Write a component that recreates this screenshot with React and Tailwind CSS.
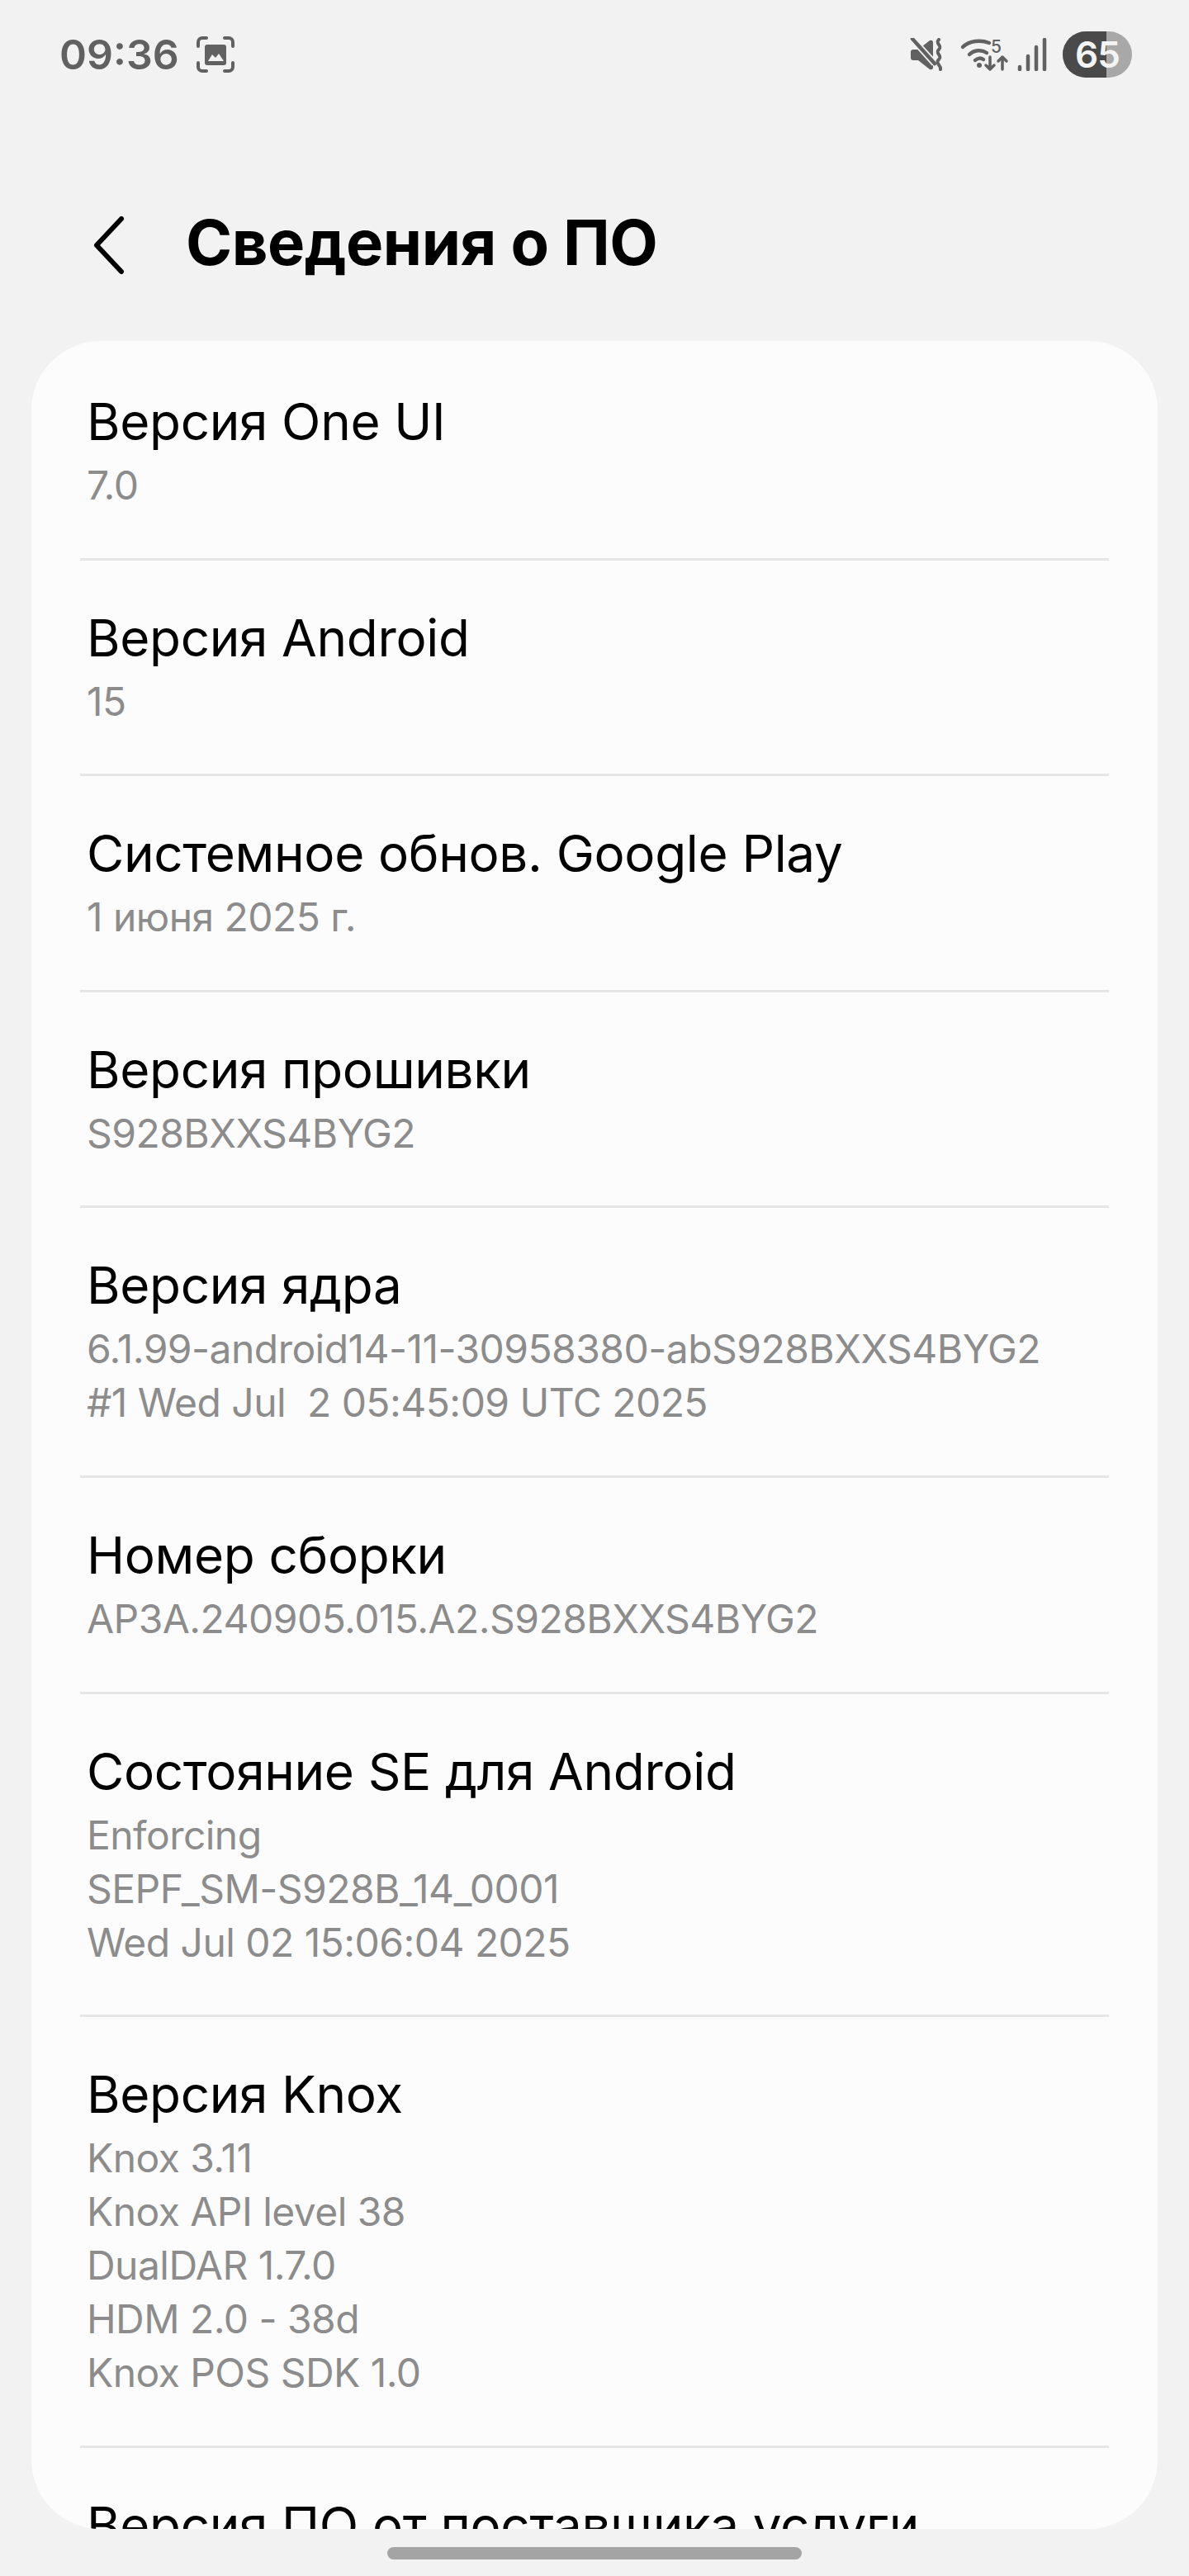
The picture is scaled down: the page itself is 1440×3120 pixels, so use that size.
import React from 'react';

const rows = [
  { title: 'Версия One UI', lines: ['7.0'] },
  { title: 'Версия Android', lines: ['15'] },
  { title: 'Системное обнов. Google Play', lines: ['1 июня 2025 г.'] },
  { title: 'Версия прошивки', lines: ['S928BXXS4BYG2'] },
  { title: 'Версия ядра', lines: ['6.1.99-android14-11-30958380-abS928BXXS4BYG2', '#1 Wed Jul  2 05:45:09 UTC 2025'] },
  { title: 'Номер сборки', lines: ['AP3A.240905.015.A2.S928BXXS4BYG2'] },
  { title: 'Состояние SE для Android', lines: ['Enforcing', 'SEPF_SM-S928B_14_0001', 'Wed Jul 02 15:06:04 2025'] },
  { title: 'Версия Knox', lines: ['Knox 3.11', 'Knox API level 38', 'DualDAR 1.7.0', 'HDM 2.0 - 38d', 'Knox POS SDK 1.0'] },
  { title: 'Версия ПО от поставщика услуги', lines: [] },
];

const ScreenshotIcon = () => (
  <svg width="48" height="46" viewBox="0 0 48 46" fill="none">
    <g stroke="#616161" strokeWidth="4" strokeLinecap="round">
      <path d="M13 3H8a5 5 0 0 0-5 5v5" />
      <path d="M35 3h5a5 5 0 0 1 5 5v5" />
      <path d="M13 43H8a5 5 0 0 1-5-5v-5" />
      <path d="M35 43h5a5 5 0 0 0 5-5v-5" />
    </g>
    <rect x="11" y="11" width="26" height="25" rx="3" fill="#616161" />
    <path d="M15 31l5-8 4 4 4-5 6 9z" fill="#f2f2f2" />
  </svg>
);

const MuteIcon = () => (
  <svg width="42" height="40" viewBox="0 0 42 40" fill="none">
    <path d="M1 17q0-3 3-3h6L24 3q4-1 4 3v30q0 3-4 2L10 27H4q-3 0-3-3z" fill="#616161" />
    <path d="M3 1l27 30" stroke="#f2f2f2" strokeWidth="8" />
    <path d="M3 1l27 30" stroke="#616161" strokeWidth="4.5" strokeLinecap="round" />
    <path d="M35 2c-5 5 5 7 0 12s5 7 0 12 3 7 2 12" stroke="#616161" strokeWidth="4" strokeLinecap="round" />
  </svg>
);

const WifiIcon = () => (
  <svg width="56" height="40" viewBox="0 0 56 40" fill="none" overflow="visible">
    <g stroke="#616161" strokeWidth="4.5" strokeLinecap="round">
      <path d="M2 11C10 3 24 2 34 6" />
      <path d="M10 20c6-6 15-6 21-2" />
      <path d="M17 27c3-3 7-3 10-1" />
    </g>
    <circle cx="22" cy="33" r="3" fill="#616161" />
    <text x="36" y="18" fontSize="21" fontWeight="500" fill="#616161" fontFamily="Inter, sans-serif">5</text>
    <g stroke="#616161" strokeWidth="3.5" strokeLinecap="round" strokeLinejoin="round">
      <path d="M35 23v15M30 33l5 5 5-5" />
      <path d="M50 38V23M45 28l5-5 5 5" />
    </g>
  </svg>
);

const SignalIcon = () => (
  <svg width="36" height="40" viewBox="0 0 36 40" fill="none">
    <g stroke="#616161" strokeWidth="4.5" strokeLinecap="round">
      <path d="M3 35v3" />
      <path d="M13 22v16" />
      <path d="M23 11v27" />
      <path d="M33 2v36" />
    </g>
  </svg>
);

const Battery = () => (
  <div className="relative flex h-[56px] w-[84px] items-center justify-center overflow-hidden rounded-full bg-[#a8a8a8]">
    <div className="absolute inset-y-0 left-0 w-[53px] bg-[#4a4a4a]" />
    <span className="relative text-[44px] font-semibold tracking-[-1px] text-[#f4f4f4]">65</span>
  </div>
);

const Row = ({ title, lines, first, last }) => (
  <div className="shrink-0">
    <div className={`px-[67px] pb-[55.6px] ${first ? 'pt-[63px]' : 'pt-[59px]'}`}>
      <div className="h-[70px] text-[62px] leading-[70px] tracking-[-0.35px] whitespace-nowrap text-black">{title}</div>
      {lines.length > 0 && (
        <div className="mt-[9px] text-[48px] leading-[65px] tracking-[-0.55px] whitespace-pre text-[#8c8c8c]">
          {lines.map((line, i) => <div key={i}>{line}</div>)}
        </div>
      )}
    </div>
    {!last && <div className="mx-[59px] h-[3px] bg-[#e6e6e6]" />}
  </div>
);

export default function App() {
  return (
    <div className="flex h-[3120px] w-[1440px] flex-col overflow-hidden bg-[#f2f2f2] font-['Inter','Noto_Sans',sans-serif]">
      {/* Status bar */}
      <div className="flex h-[132px] shrink-0 items-center justify-between pr-[69px] pl-[72px]">
        <div className="flex items-center gap-[20px]">
          <span className="text-[50px] font-semibold text-[#616161]">09:36</span>
          <ScreenshotIcon />
        </div>
        <div className="flex items-center">
          <MuteIcon />
          <div className="ml-[20px]"><WifiIcon /></div>
          <div className="ml-[12px]"><SignalIcon /></div>
          <div className="ml-[19px]"><Battery /></div>
        </div>
      </div>

      {/* Header */}
      <div className="flex h-[281px] shrink-0 items-start pt-[130px] pl-[113px]">
        <svg width="40" height="70" viewBox="0 0 40 70" fill="none">
          <path d="M34 3L4 35l30 32" stroke="#000" strokeWidth="6" strokeLinecap="round" strokeLinejoin="round" />
        </svg>
        <h1 className="ml-[72px] text-[76px] leading-[62px] font-bold tracking-[-0.5px] text-black">Сведения о ПО</h1>
      </div>

      {/* List */}
      <div className="mx-[38px] flex min-h-0 flex-1 flex-col overflow-hidden rounded-[84px] bg-[#fcfcfc]">
        {rows.map((row, i) => (
          <Row key={i} title={row.title} lines={row.lines} first={i === 0} last={i === rows.length - 1} />
        ))}
      </div>

      {/* Home indicator */}
      <div className="flex h-[57px] shrink-0 justify-center pt-[22px]">
        <div className="h-[15px] w-[502px] rounded-full bg-[#a4a4a4]" />
      </div>
    </div>
  );
}
